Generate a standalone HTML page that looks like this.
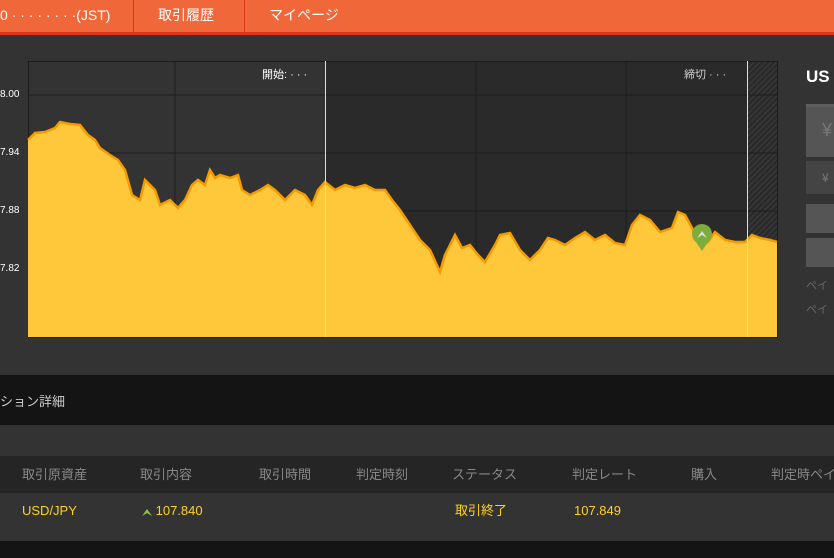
<!DOCTYPE html>
<html><head><meta charset="utf-8"><style>
*{margin:0;padding:0;box-sizing:border-box}
body{width:834px;height:558px;overflow:hidden;background:#333;font-family:"Liberation Sans","Noto Sans CJK JP",sans-serif;position:relative}
.a{position:absolute}
.t{position:absolute;white-space:nowrap;line-height:16px}
</style></head><body>
<div class="a" style="left:0;top:0;width:834px;height:32px;background:#f0683a"></div>
<div class="a" style="left:0;top:32px;width:834px;height:3px;background:#e0361c"></div>
<div class="a" style="left:133px;top:0;width:1px;height:32px;background:#e0361c"></div>
<div class="a" style="left:244px;top:0;width:1px;height:32px;background:#e0361c"></div>
<div class="t" style="left:0;top:7px;color:#fff;font-size:14px">0 · · · · · · · ·(JST)</div>
<div class="t" style="left:158px;top:7px;color:#fff;font-size:14px">取引履歴</div>
<div class="t" style="left:269px;top:7px;color:#fff;font-size:14px">マイページ</div>

<svg class="a" style="left:0;top:35px" width="834" height="340">
<defs><pattern id="h" width="4" height="4" patternUnits="userSpaceOnUse" patternTransform="rotate(45)"><rect width="4" height="4" fill="#2a2a2a"/><line x1="0" y1="0" x2="0" y2="4" stroke="#444" stroke-width="1.5"/></pattern></defs>
<rect x="28" y="26" width="297" height="276" fill="#333"/>
<rect x="325" y="26" width="423" height="276" fill="#2a2a2a"/>
<rect x="748" y="26" width="29" height="276" fill="url(#h)"/>
<rect x="28.5" y="26.5" width="749" height="276" fill="none" stroke="#1c1c1c"/>
<g stroke="#1c1c1c"><line x1="28" y1="60" x2="777" y2="60"/><line x1="28" y1="118" x2="777" y2="118"/><line x1="28" y1="176" x2="777" y2="176"/><line x1="28" y1="234" x2="777" y2="234"/>
<line x1="175" y1="26" x2="175" y2="302"/><line x1="476" y1="26" x2="476" y2="302"/><line x1="626" y1="26" x2="626" y2="302"/></g>
<polygon fill="#ffc83a" points="28,105 35,98 45,97 55,93 60,87 70,89 80,90 88,100 95,105 100,113 110,120 118,125 125,135 132,160 140,165 145,145 150,150 155,155 160,170 170,165 178,173 185,165 192,150 198,145 205,150 210,135 215,143 220,140 230,143 238,140 242,155 250,160 260,155 268,150 275,155 285,165 295,155 305,160 312,170 318,155 325,147 335,155 345,150 355,153 365,150 375,155 385,155 392,165 400,175 410,190 420,205 430,215 440,237 445,220 450,210 455,200 462,213 470,210 478,220 485,227 495,210 500,200 510,198 520,215 530,225 540,215 548,203 555,205 565,210 575,203 585,197 595,205 605,200 615,208 625,210 632,190 640,180 650,185 660,197 672,193 678,177 685,180 692,193 700,210 708,207 715,197 725,205 735,207 745,207 752,200 760,203 770,205 777,207 777,302 28,302"/>
<polyline fill="none" stroke="#f59a00" stroke-width="2.5" points="28,105 35,98 45,97 55,93 60,87 70,89 80,90 88,100 95,105 100,113 110,120 118,125 125,135 132,160 140,165 145,145 150,150 155,155 160,170 170,165 178,173 185,165 192,150 198,145 205,150 210,135 215,143 220,140 230,143 238,140 242,155 250,160 260,155 268,150 275,155 285,165 295,155 305,160 312,170 318,155 325,147 335,155 345,150 355,153 365,150 375,155 385,155 392,165 400,175 410,190 420,205 430,215 440,237 445,220 450,210 455,200 462,213 470,210 478,220 485,227 495,210 500,200 510,198 520,215 530,225 540,215 548,203 555,205 565,210 575,203 585,197 595,205 605,200 615,208 625,210 632,190 640,180 650,185 660,197 672,193 678,177 685,180 692,193 700,210 708,207 715,197 725,205 735,207 745,207 752,200 760,203 770,205 777,207"/>
<line x1="325.5" y1="26" x2="325.5" y2="302" stroke="#ddd"/>
<line x1="747.5" y1="26" x2="747.5" y2="302" stroke="#ddd"/>
<circle cx="702" cy="199" r="10" fill="#7cac3a"/><path d="M694,204 L702,216 L710,204Z" fill="#7cac3a"/>
<path d="M697,203 L702,196 L707,203 L702,200Z" fill="#ddd"/>
</svg>
<div class="t" style="left:0;top:87px;color:#fff;font-size:10px">8.00</div>
<div class="t" style="left:0;top:145px;color:#fff;font-size:10px">7.94</div>
<div class="t" style="left:0;top:203px;color:#fff;font-size:10px">7.88</div>
<div class="t" style="left:0;top:261px;color:#fff;font-size:10px">7.82</div>
<div class="t" style="left:262px;top:67px;color:#fff;font-size:11px">開始: · · ·</div>
<div class="t" style="left:684px;top:67px;color:#ccc;font-size:11px">締切 · · ·</div>

<div class="t" style="left:806px;top:69px;color:#fff;font-size:17px;font-weight:bold">US</div>
<div class="a" style="left:806px;top:104px;width:28px;height:53px;background:#555;border-top:3px solid #5e5e5e"></div>
<div class="t" style="left:822px;top:122px;color:#777;font-size:18px">¥</div>
<div class="a" style="left:806px;top:161px;width:28px;height:33px;background:#444"></div>
<div class="t" style="left:822px;top:170px;color:#777;font-size:12px">¥</div>
<div class="a" style="left:806px;top:204px;width:28px;height:29px;background:#555"></div>
<div class="a" style="left:806px;top:238px;width:28px;height:29px;background:#555"></div>
<div class="t" style="left:806px;top:278px;color:#666;font-size:11px">ペイ</div>
<div class="t" style="left:806px;top:302px;color:#666;font-size:11px">ペイ</div>

<div class="a" style="left:0;top:375px;width:834px;height:50px;background:#141414"></div>
<div class="t" style="left:0;top:394px;color:#ccc;font-size:13px">ション詳細</div>
<div class="a" style="left:0;top:425px;width:834px;height:31px;background:#333"></div>
<div class="a" style="left:0;top:456px;width:834px;height:37px;background:#252525"></div>
<div class="a" style="left:0;top:493px;width:834px;height:48px;background:#333"></div>
<div class="a" style="left:0;top:541px;width:834px;height:17px;background:#141414"></div>
<div style="position:absolute;top:467px;left:0;color:#888;font-size:13px">
<span class="t" style="left:22px">取引原資産</span><span class="t" style="left:140px">取引内容</span><span class="t" style="left:259px">取引時間</span><span class="t" style="left:356px">判定時刻</span><span class="t" style="left:452px">ステータス</span><span class="t" style="left:572px">判定レート</span><span class="t" style="left:691px">購入</span><span class="t" style="left:771px">判定時ペイ</span></div>
<div style="position:absolute;top:503px;left:0;color:#ffd21e;font-size:13px">
<span class="t" style="left:22px">USD/JPY</span>
<span class="t" style="left:142px"><svg width="10" height="9" style="vertical-align:-1px"><path d="M0,9 L5,2 L10,9 L5,6Z" fill="#8bc34a"/></svg> 107.840</span>
<span class="t" style="left:455px">取引終了</span><span class="t" style="left:574px">107.849</span></div>
</body></html>
